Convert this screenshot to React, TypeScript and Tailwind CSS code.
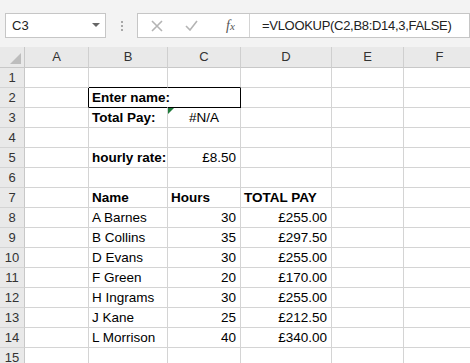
import React from "react";

type Cell = { t?: string; b?: boolean; align?: "l" | "r" | "c"; tri?: boolean };

const font = { fontFamily: '"Liberation Sans", Arial, sans-serif' };

const rows: Record<number, Record<string, Cell>> = {
  2: { B: { t: "Enter name:", b: true } },
  3: { B: { t: "Total Pay:", b: true }, C: { t: "#N/A", align: "c", tri: true } },
  5: { B: { t: "hourly rate:", b: true }, C: { t: "£8.50", align: "r" } },
  7: { B: { t: "Name", b: true }, C: { t: "Hours", b: true }, D: { t: "TOTAL PAY", b: true } },
  8: { B: { t: "A Barnes" }, C: { t: "30", align: "r" }, D: { t: "£255.00", align: "r" } },
  9: { B: { t: "B Collins" }, C: { t: "35", align: "r" }, D: { t: "£297.50", align: "r" } },
  10: { B: { t: "D Evans" }, C: { t: "30", align: "r" }, D: { t: "£255.00", align: "r" } },
  11: { B: { t: "F Green" }, C: { t: "20", align: "r" }, D: { t: "£170.00", align: "r" } },
  12: { B: { t: "H Ingrams" }, C: { t: "30", align: "r" }, D: { t: "£255.00", align: "r" } },
  13: { B: { t: "J Kane" }, C: { t: "25", align: "r" }, D: { t: "£212.50", align: "r" } },
  14: { B: { t: "L Morrison" }, C: { t: "40", align: "r" }, D: { t: "£340.00", align: "r" } },
};

const letters = ["A", "B", "C", "D", "E", "F"];

function borderCls(r: number, c: string): string {
  let right = "border-r-[#d4d4d4]";
  let bottom = "border-b-[#d4d4d4]";
  if (r === 2 && c === "A") right = "border-r-black";
  if (r === 2 && c === "B") right = "border-r-white";
  if (r === 2 && c === "C") right = "border-r-black";
  if (r === 1 && (c === "B" || c === "C")) bottom = "border-b-black";
  if (r === 2 && (c === "B" || c === "C")) bottom = "border-b-black";
  return `border-r border-b ${right} ${bottom}`;
}

export default function App() {
  const rowNums = Array.from({ length: 15 }, (_, i) => i + 1);
  return (
    <div className="w-[470px] h-[363px] overflow-hidden bg-white text-black" style={font}>
      {/* Formula bar */}
      <div className="h-[47px] bg-[#f3f3f3] flex items-start pt-[13px] pl-[5px]">
        <div className="w-[101px] h-[25px] bg-white border border-[#c6c6c6] flex items-center pl-[6px] pr-[5px] text-[13px] text-[#222]">
          <span className="flex-1">C3</span>
          <svg width="8" height="5" viewBox="0 0 8 5"><path d="M0 0 L8 0 L4 4 Z" fill="#666" /></svg>
        </div>
        <div className="w-[31px] h-[25px] flex flex-col items-center justify-center gap-[2px]">
          <div className="w-[2px] h-[2px] bg-[#a8a8a8]" />
          <div className="w-[2px] h-[2px] bg-[#a8a8a8]" />
          <div className="w-[2px] h-[2px] bg-[#a8a8a8]" />
        </div>
        <div className="flex-1 h-[25px] bg-white border border-[#c6c6c6] flex items-center">
          <div className="w-[111px] h-full flex items-center">
            <svg className="ml-[13px]" width="12" height="12" viewBox="0 0 12 12">
              <path d="M1 1 L11 11 M11 1 L1 11" stroke="#b4b4b4" strokeWidth="1.6" />
            </svg>
            <svg className="ml-[22px]" width="13" height="11" viewBox="0 0 13 11">
              <path d="M1 6 L5 10 L12 1" stroke="#b4b4b4" strokeWidth="1.6" fill="none" />
            </svg>
            <span className="ml-[28px] text-[14px] italic text-[#555]" style={{ fontFamily: '"Liberation Serif", serif' }}>
              f<span className="text-[11px]">x</span>
            </span>
          </div>
          <div className="h-full w-px bg-[#d4d4d4]" />
          <div className="pl-[12px] text-[13px] text-[#222] tracking-[-0.3px] whitespace-nowrap">
            =VLOOKUP(C2,B8:D14,3,FALSE)
          </div>
        </div>
      </div>
      {/* Sheet */}
      <div className="grid grid-cols-[25px_64px_79px_73px_91px_72px_72px] grid-rows-[21px] auto-rows-[20px]">
        <div className="relative bg-[#e9e9e9] border-r border-b border-[#c8c8c8]">
          <svg className="absolute right-[3px] bottom-[3px]" width="11" height="11" viewBox="0 0 11 11">
            <path d="M11 0 L11 11 L0 11 Z" fill="#bdbdbd" />
          </svg>
        </div>
        {letters.map((l) => (
          <div key={l} className="bg-[#e9e9e9] border-r border-b border-r-[#cfcfcf] border-b-[#c8c8c8] flex items-center justify-center text-[13px] text-[#333]">
            {l}
          </div>
        ))}
        {rowNums.map((r) => (
          <React.Fragment key={r}>
            <div className="bg-[#e9e9e9] border-r border-b border-r-[#c8c8c8] border-b-[#d4d4d4] flex items-center justify-center text-[13px] text-[#333]">
              {r}
            </div>
            {letters.map((c) => {
              const cell = rows[r]?.[c];
              const al = cell?.align === "r" ? "justify-end pr-[4px]" : cell?.align === "c" ? "justify-center" : "justify-start pl-[3px]";
              return (
                <div key={c} className={`relative flex items-center whitespace-nowrap text-[13.5px] leading-[20px] pt-[1px] ${al} ${borderCls(r, c)} ${cell?.b ? "font-bold" : ""}`}>
                  {cell?.tri && (
                    <svg className="absolute left-0 top-0" width="6" height="6" viewBox="0 0 6 6">
                      <path d="M0 0 L6 0 L0 6 Z" fill="#1f7a3a" />
                    </svg>
                  )}
                  {cell?.t}
                </div>
              );
            })}
          </React.Fragment>
        ))}
      </div>
    </div>
  );
}
